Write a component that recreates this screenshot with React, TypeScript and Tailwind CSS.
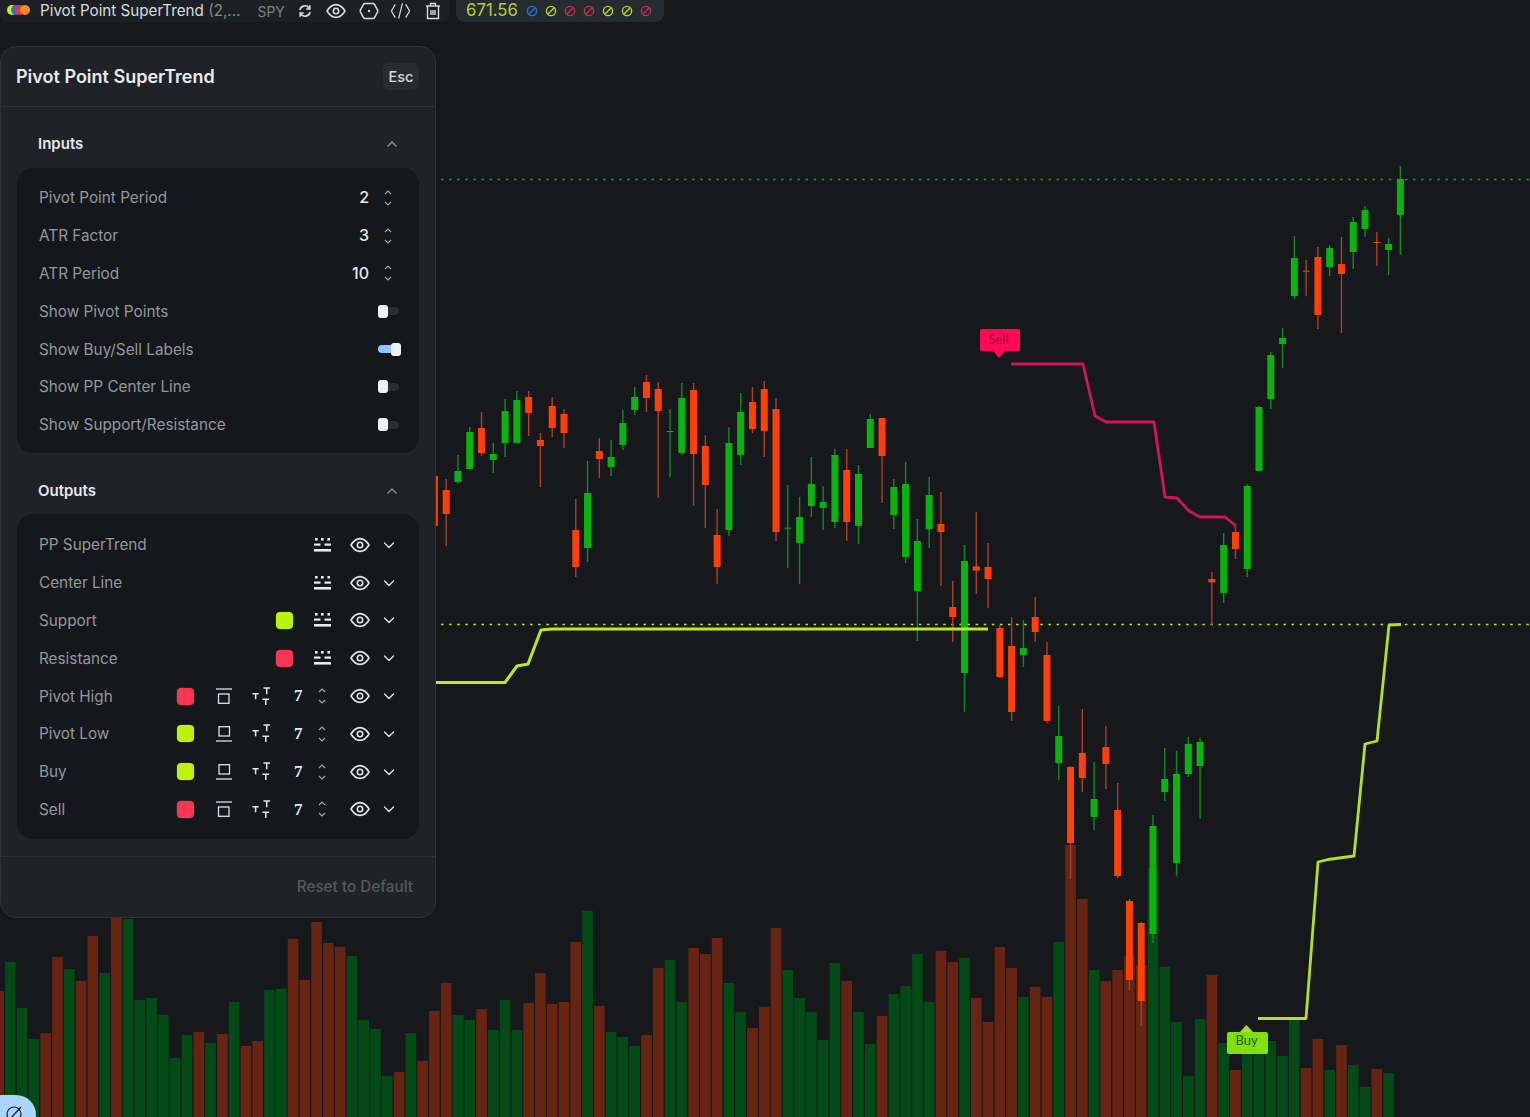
import React from 'react';

const START = 10.33;
const STEP = 11.78;
const X = (i: number) => START + STEP * i;

// volume tops, index -1 .. 117
const VOL: [string, number][] = [
  ['r',991],['g',962],['g',1008],['g',1039],['r',1033],['r',957],['g',969],['r',981],['r',936],['g',973],['r',918],['g',919],['g',1000],['g',998],['g',1015],['g',1058],['g',1035],['r',1032],['g',1043],['r',1034],['g',1002],['r',1046],['r',1041],['g',990],['g',989],['r',939],['r',980],['r',922],['r',943],['r',947],['g',956],['g',1020],['g',1029],['g',1076],['r',1072],['g',1033],['r',1061],['r',1011],['r',983],['g',1015],['g',1020],['r',1009],['g',1030],
  ['g',1000],['g',1030],['r',1003],['r',973],['r',1004],['r',1002],['r',942],['g',911],['r',1006],['g',1032],['g',1037],['g',1046],['r',1035],['r',968],['g',960],['g',1002],['r',948],['r',954],['r',938],['g',983],['g',1012],['r',1028],['r',1007],['r',928],['g',970],['g',998],['g',1012],['g',1040],['g',963],['r',981],['g',1012],['g',1044],['r',1016],['g',994],['g',986],['g',954],['g',1002],['r',951],['r',962],['g',958],['r',998],['r',1022],['r',947],
  ['r',968],['g',997],['r',987],['r',997],['g',942],['r',845],['r',899],['g',970],['r',981],['r',970],['r',956],['r',965],['g',868],['g',967],['g',1022],['g',1076],['g',1019],['r',975],['g',1043],['r',1070],['g',1048],['g',1040],['g',1041],['g',1056],['g',1019],['r',1068],['r',1039],['g',1070],['r',1045],['g',1065],['g',1087],['r',1069],['g',1073],
];

type C = [number, string, number, number, number, number];
const a = (y: number, t: number, h: number, l: number, b: number): [number, number, number, number] => [y + t / 3, y + h / 3, y + l / 3, y + b / 3];
const mk = (y: number, rows: [number, string, number, number, number, number][]): C[] =>
  rows.map(([i, c, t, h, l, b]) => { const v = a(y, t, h, l, b); return [i, c, v[0], v[1], v[2], v[3]]; });

const CANDLES: C[] = [
  ...mk(370, [
    [36,'r',318,318,468,468],[37,'r',327,360,432,528],[38,'g',255,303,336,342],[39,'g',171,186,297,300],[40,'r',126,174,249,258],[41,'g',219,252,270,309],[42,'g',87,123,219,261],[43,'g',63,90,219,219],[44,'r',63,81,129,198],[45,'r',189,210,228,351],[46,'r',81,108,174,201],[47,'r',117,132,189,234],[48,'r',387,480,591,621],[49,'g',273,369,534,576],[50,'r',204,243,267,324],[51,'g',210,261,291,318],[52,'g',120,159,225,240],[53,'g',51,81,120,135],[54,'r',15,36,84,126],[55,'r',36,57,123,384],[56,'g',117,183,186,321],[57,'g',39,84,249,255],[58,'r',39,60,252,408],[59,'r',195,228,345,474],[60,'r',417,495,591,642],[61,'g',171,219,480,498],[62,'g',69,126,255,285],[63,'r',51,96,177,189],[64,'r',33,57,183,261],[65,'r',84,117,486,513],[66,'g',345,473,476,594],[67,'g',380,441,519,642],[68,'g',261,342,408,441],[69,'g',348,396,414,480],[70,'g',237,255,456,474],
  ]),
  ...mk(320, [
    [71,'r',387,450,606,663],[72,'g',435,462,618,672],[73,'g',282,297,384,384],[74,'r',294,294,408,549],[75,'g',477,501,585,627],[76,'g',426,492,711,729],[77,'g',597,663,813,963],[78,'g',471,525,627,684],[79,'r',516,612,636,798],[80,'r',783,861,891,966],[81,'g',675,723,1059,1176],[82,'r',576,739,752,822],[83,'r',669,741,777,864],
  ]),
  ...mk(610, [
    [84,'r',45,54,201,204],[85,'r',21,108,306,333],[86,'g',30,114,135,171],[87,'r',-39,21,66,96],[88,'r',96,135,333,339],[89,'g',288,378,459,510],[90,'r',468,471,699,807],[91,'r',297,429,504,546],[92,'g',456,567,621,660],[93,'r',348,411,462,537],[94,'r',519,600,798,804],[95,'r',867,873,1110,1140],[96,'r',936,939,1173,1248],[97,'g',615,648,972,999],[98,'g',414,507,546,573],[99,'g',423,492,759,798],[100,'g',381,402,492,501],[101,'g',384,396,468,627],
  ]),
  ...mk(160, [
    [102,'r',1236,1257,1267,1395],[103,'g',1119,1155,1299,1329],[104,'r',1098,1116,1167,1197],[105,'g',972,978,1227,1251],[106,'g',738,741,933,933],[107,'g',576,585,717,747],[108,'g',504,534,552,624],[109,'g',228,294,408,417],[110,'r',300,332,335,408],[111,'r',261,291,465,507],[112,'g',255,264,321,348],[113,'r',231,312,342,519],[114,'g',171,186,276,327],[115,'g',138,150,207,231],[116,'r',216,246,249,318],[117,'g',234,252,270,345],[118,'g',18,57,165,285],
  ]),
];

const Chart = () => (
  <svg className="absolute inset-0" width={1530} height={1117} viewBox="0 0 1530 1117">
    {VOL.map(([c, top], k) => (
      <rect key={k} x={X(k - 1) - 5.3} y={top} width={10.6} height={1117 - top} fill={c === 'g' ? '#034a17' : '#672412'} />
    ))}
    <line x1={441} y1={179.5} x2={1530} y2={179.5} stroke="#0bb015" strokeWidth={1.5} strokeDasharray="2.5 5.6" />
    <line x1={441} y1={624.5} x2={1530} y2={624.5} stroke="#c3e51c" strokeWidth={1.6} strokeDasharray="2.5 5.6" />
    {CANDLES.map(([i, c, t, h, l, b]) => (
      <g key={i}>
        <line x1={X(i)} x2={X(i)} y1={t} y2={b} stroke={c === 'g' ? '#14882a' : '#a9422a'} strokeWidth={1.4} />
        <rect x={X(i) - 3.5} y={h} width={7} height={Math.max(l - h, 1)} fill={c === 'g' ? '#0ab30e' : '#ff3f08'} />
      </g>
    ))}
    <polyline points="436,682.5 505,682.5 517,666 528,664 541,630 552,629 988,629" fill="none" stroke="#bcea22" strokeWidth={3} strokeLinejoin="round" />
    <polyline points="1258,1018.5 1306,1018.5 1318,862 1328,859.5 1354,856 1365,744 1377,741 1389,625 1401,624.5" fill="none" stroke="#b4e02a" strokeWidth={2.8} strokeLinejoin="round" />
    <polyline points="1011,364 1083,364 1095,416 1106,422 1154,422 1165,497 1177,498 1189,511 1200,517 1225,517 1236,526" fill="none" stroke="#d1155c" strokeWidth={2.8} strokeLinejoin="round" />
    <rect x={980} y={329} width={40} height={22} rx={2} fill="#ff0a55" />
    <path d="M993 351 L1005 351 L999 358 Z" fill="#ff0a55" />
    <text x={998.5} y={344} textAnchor="middle" fontSize={13} fill="#a50e3c" fontFamily="'Lato','Open Sans',sans-serif">Sell</text>
    <path d="M1240 1032 L1253 1032 L1246.5 1025 Z" fill="#9be51f" />
    <rect x={1227} y={1032} width={41} height={22} rx={2} fill="#8bf00e" fillOpacity={0.92} />
    <text x={1246.5} y={1045} textAnchor="middle" fontSize={13} fill="#245a10" fontFamily="'Lato','Open Sans',sans-serif">Buy</text>
  </svg>
);

const Eye = ({ className = 'w-5 h-5' }: { className?: string }) => (
  <svg viewBox="0 0 20 20" className={`shrink-0 ${className}`} fill="none" stroke="currentColor" strokeWidth={1.6}>
    <path d="M1 10 C4 5 7 3.6 10 3.6 C13 3.6 16 5 19 10 C16 15 13 16.4 10 16.4 C7 16.4 4 15 1 10 Z" strokeLinejoin="round" />
    <circle cx={10} cy={10} r={2.7} />
  </svg>
);
const Chevron = ({ up = false, className = 'w-3 h-3' }: { up?: boolean; className?: string }) => (
  <svg viewBox="0 0 12 12" className={`shrink-0 ${className}`} fill="none" stroke="currentColor" strokeWidth={1.4} strokeLinecap="round" strokeLinejoin="round">
    <path d={up ? 'M2 8 L6 4 L10 8' : 'M1.5 4 L6 8.5 L10.5 4'} />
  </svg>
);
const Stepper = ({ className = '' }: { className?: string }) => (
  <div className={`flex flex-col items-center gap-[6px] w-2 shrink-0 text-[#a4a8ad] ${className}`}>
    <svg viewBox="0 0 8 5" className="w-2 h-[5px]" fill="none" stroke="currentColor" strokeWidth={1.1}><path d="M1 4 L4 1 L7 4" /></svg>
    <svg viewBox="0 0 8 5" className="w-2 h-[5px]" fill="none" stroke="currentColor" strokeWidth={1.1}><path d="M1 1 L4 4 L7 1" /></svg>
  </div>
);
const LineStyle = () => (
  <svg viewBox="0 0 17 14" className="w-[17px] h-[14px] text-[#e8eaed]" fill="currentColor">
    <rect x={1} y={0} width={2.6} height={2.6} /><rect x={7} y={0} width={2.6} height={2.6} /><rect x={13.4} y={0} width={2.6} height={2.6} />
    <rect x={0} y={5.5} width={6.5} height={2.2} /><rect x={10.5} y={5.5} width={6.5} height={2.2} />
    <rect x={0} y={11} width={17} height={2.6} />
  </svg>
);
const BoxBar = ({ top }: { top: boolean }) => (
  <svg viewBox="0 0 16 16" className="w-4 h-4 text-[#dfe1e4]" fill="none" stroke="currentColor" strokeWidth={1.3}>
    {top ? (
      <><path d="M0 1 H16" /><rect x={2.5} y={6} width={10.5} height={9.3} /></>
    ) : (
      <><path d="M0 15 H16" /><rect x={3} y={0.7} width={10.5} height={9.3} /></>
    )}
  </svg>
);
const TextSize = () => (
  <svg viewBox="0 0 20 20" className="w-[19px] h-[19px] text-[#e4e6e9]" fill="none" stroke="currentColor" strokeWidth={1.6}>
    <path d="M0.5 7 H7 M3.8 7 V13" />
    <path d="M12 1 H19 M15.5 1 V7.5" />
    <path d="M11 13 H18 M14.5 13 V19" />
  </svg>
);
const Swatch = ({ color }: { color: string }) => (
  <div className="w-[19px] h-[19px] rounded-md border border-[#26292e] shrink-0">
    <div className="w-full h-full rounded-[4px]" style={{ backgroundColor: color }} />
  </div>
);

const Toggle = ({ on = false }: { on?: boolean }) =>
  on ? (
    <div className="flex items-center w-[23px] h-[13px]">
      <div className="w-[17px] h-2 rounded-l-sm bg-[#8fc6ff]" />
      <div className="w-[10px] h-[13px] -ml-[3px] rounded-[3px] bg-[#eef1f5]" />
    </div>
  ) : (
    <div className="flex items-center w-[23px] h-[13px]">
      <div className="w-[10px] h-[13px] rounded-[3px] bg-[#eef1f5] relative z-10" />
      <div className="w-[11px] h-2 rounded-r-sm bg-[#2a2e33]" />
    </div>
  );

const INPUTS: [string, string][] = [['Pivot Point Period', '2'], ['ATR Factor', '3'], ['ATR Period', '10']];
const TOGGLES: [string, boolean][] = [['Show Pivot Points', false], ['Show Buy/Sell Labels', true], ['Show PP Center Line', false], ['Show Support/Resistance', false]];
const LINES: [string, string | null][] = [['PP SuperTrend', null], ['Center Line', null], ['Support', '#bdf20a'], ['Resistance', '#fa3554']];
const PLOTS: [string, string, boolean][] = [['Pivot High', '#fa3554', true], ['Pivot Low', '#bdf20a', false], ['Buy', '#bdf20a', false], ['Sell', '#fa3554', true]];

const Row = ({ label, children }: { label: string; children: React.ReactNode }) => (
  <div className="flex items-center h-[37.8px]">
    <span className="flex-1 pt-[2px] text-[15.3px] text-[#94989d]">{label}</span>
    {children}
  </div>
);

const Section = ({ title, pad }: { title: string; pad: string }) => (
  <div className={`flex items-center justify-between h-[61px] pl-[37px] pr-[37px] ${pad}`}>
    <span className="text-[15px] font-semibold text-[#e6e8ea]">{title}</span>
    <Chevron up className="w-3 h-3 -mt-[2px] text-[#8c9095]" />
  </div>
);

const Panel = () => (
  <div className="absolute left-0 top-[46px] w-[436px] h-[872px] rounded-2xl border border-[#2e3237] bg-[#1f2327] flex flex-col">
    <div className="flex items-center justify-between h-[60px] shrink-0 pl-[15px] pr-[16px] border-b border-[#2e3237]">
      <span className="text-[18px] font-semibold text-[#e9ebed]">Pivot Point SuperTrend</span>
      <span className="w-9 h-[27px] rounded-md bg-[#282c31] flex items-center justify-center text-[14.5px] font-medium text-[#d7d9dc]">Esc</span>
    </div>
    <Section title="Inputs" pad="pt-[14px]" />
    <div className="mx-4 h-[285px] rounded-2xl bg-[#14171b] pl-[22px] pr-[18px] pt-[11px] shrink-0">
      {INPUTS.map(([l, v]) => (
        <Row key={l} label={l}>
          <span className="text-[16px] font-medium text-[#e6e8ea] mr-[15px] -mt-[1px]">{v}</span>
          <Stepper className="mr-[9px]" />
        </Row>
      ))}
      {TOGGLES.map(([l, on]) => (
        <Row key={l} label={l}>
          <Toggle on={on} />
        </Row>
      ))}
    </div>
    <Section title="Outputs" pad="pt-[16px]" />
    <div className="mx-4 h-[325px] rounded-2xl bg-[#14171b] pl-[22px] pr-[24px] pt-[12px] shrink-0">
      {LINES.map(([l, c]) => (
        <Row key={l} label={l}>
          {c && <Swatch color={c} />}
          <div className="ml-[20px]"><LineStyle /></div>
          <div className="ml-[19px]"><Eye className="w-5 h-5 text-[#e4e6e9]" /></div>
          <Chevron className="w-3 h-3 ml-[13px] text-[#dfe1e4]" />
        </Row>
      ))}
      {PLOTS.map(([l, c, top]) => (
        <Row key={l} label={l}>
          <Swatch color={c} />
          <div className="ml-[21px]"><BoxBar top={top} /></div>
          <div className="ml-5"><TextSize /></div>
          <span className="ml-[23px] w-[9px] text-[17px] font-bold text-[#e6e8ea] [font-family:'Liberation_Serif',serif]">7</span>
          <Stepper className="ml-[15px]" />
          <div className="ml-[24px]"><Eye className="w-5 h-5 text-[#e4e6e9]" /></div>
          <Chevron className="w-3 h-3 ml-[13px] text-[#dfe1e4]" />
        </Row>
      ))}
    </div>
    <div className="mt-[17px] flex-1 border-t border-[#2e3237] flex items-center justify-end pr-[22px]">
      <span className="text-[15.3px] font-medium text-[#55595e]">Reset to Default</span>
    </div>
  </div>
);

const SlashCircle = ({ color }: { color: string }) => (
  <svg viewBox="0 0 12 12" className="w-3 h-3" fill="none" stroke={color} strokeWidth={1.4}>
    <circle cx={6} cy={6} r={4.6} /><path d="M3 9 L9 3" />
  </svg>
);

const Legend = () => (
  <div className="absolute left-0 top-0 flex items-start gap-[6px]">
    <div className="flex items-center w-[450px] h-[22px] pl-[7px] rounded-b-lg bg-[#1c2025]">
      <div className="flex w-[19px] shrink-0 -mt-[2px]">
        <span className="w-[10px] h-[10px] shrink-0 rounded-full bg-[#c8ef1e]" />
        <span className="w-[10px] h-[10px] shrink-0 -ml-[6px] rounded-full bg-[#2f6fd0]" />
        <span className="w-[10px] h-[10px] shrink-0 -ml-[6px] rounded-full bg-[#e8343a]" />
        <span className="w-[10px] h-[10px] shrink-0 -ml-[5px] rounded-full bg-[#f28b1e]" />
      </div>
      <span className="ml-[14px] text-[15.2px] text-[#d9dbde] whitespace-nowrap">Pivot Point SuperTrend <span className="text-[#85898e]">(2,...</span></span>
      <span className="ml-[17px] text-[14px] text-[#7c8085]">SPY</span>
      <div className="ml-[13px] text-[#d9dbde]">
        <svg viewBox="0 0 14 14" className="w-[14px] h-[14px]" fill="none" stroke="currentColor" strokeWidth={1.6} strokeLinecap="round">
          <path d="M2 5.5 A5 5 0 0 1 11.3 4.6" /><path d="M12 8.5 A5 5 0 0 1 2.7 9.4" />
          <path d="M11.8 1.8 V5 H8.8" /><path d="M2.2 12.2 V9 H5.2" />
        </svg>
      </div>
      <div className="ml-[14px] text-[#d9dbde]"><Eye className="w-5 h-5" /></div>
      <div className="ml-[13px] text-[#d9dbde]">
        <svg viewBox="0 0 20 20" className="w-5 h-5" fill="none" stroke="currentColor" strokeWidth={1.5} strokeLinejoin="round">
          <path d="M6 2.5 H14 Q15 2.5 15.5 3.4 L18.6 9.2 Q19 10 18.6 10.8 L15.5 16.6 Q15 17.5 14 17.5 H6 Q5 17.5 4.5 16.6 L1.4 10.8 Q1 10 1.4 9.2 L4.5 3.4 Q5 2.5 6 2.5 Z" />
          <circle cx={10} cy={10} r={1.2} fill="currentColor" stroke="none" />
        </svg>
      </div>
      <div className="ml-[11px] text-[#d9dbde]">
        <svg viewBox="0 0 22 18" className="w-[21px] h-[18px]" fill="none" stroke="currentColor" strokeWidth={1.3}>
          <path d="M5.5 2 L1.5 9 L5.5 16" /><path d="M16.5 2 L20.5 9 L16.5 16" /><path d="M13 1 L9 17" />
        </svg>
      </div>
      <div className="ml-[14px] text-[#d9dbde]">
        <svg viewBox="0 0 16 18" className="w-4 h-[18px]" fill="none" stroke="currentColor" strokeWidth={1.4}>
          <path d="M1 4 H15" /><path d="M5.5 4 V1.5 H10.5 V4" /><path d="M2.5 4 V16.5 H13.5 V4" />
          <path d="M6 8 V13 M8 8 V13 M10 8 V13" />
        </svg>
      </div>
    </div>
    <div className="flex items-center w-[208px] h-[22px] pl-[10px] rounded-b-lg bg-[#262b31]">
      <span className="text-[16.8px] text-[#b3d229] mr-[7px] w-[53px] whitespace-nowrap">671.56</span>
      <div className="flex gap-[7px]">
        {['#2f6fd0', '#b5d92a', '#c2304f', '#c2304f', '#b5d92a', '#b5d92a', '#c2304f'].map((c, i) => (
          <SlashCircle key={i} color={c} />
        ))}
      </div>
    </div>
  </div>
);

export default function App() {
  return (
    <div className="relative w-[1530px] h-[1117px] overflow-hidden bg-[#16181c] [font-family:Inter,'Noto_Sans',sans-serif]">
      <Chart />
      <Legend />
      <Panel />
      <div className="absolute left-0 bottom-0 w-9 h-[22px] rounded-tr-[20px] bg-[#a9d6ff] overflow-hidden flex justify-center pt-[10px] pr-[6px]">
        <svg viewBox="0 0 18 18" className="w-[18px] h-[18px] shrink-0 text-[#16181c]" fill="none" stroke="currentColor" strokeWidth={1.2}>
          <circle cx={8} cy={9} r={7} /><path d="M3 15 L15 2" />
        </svg>
      </div>
    </div>
  );
}
